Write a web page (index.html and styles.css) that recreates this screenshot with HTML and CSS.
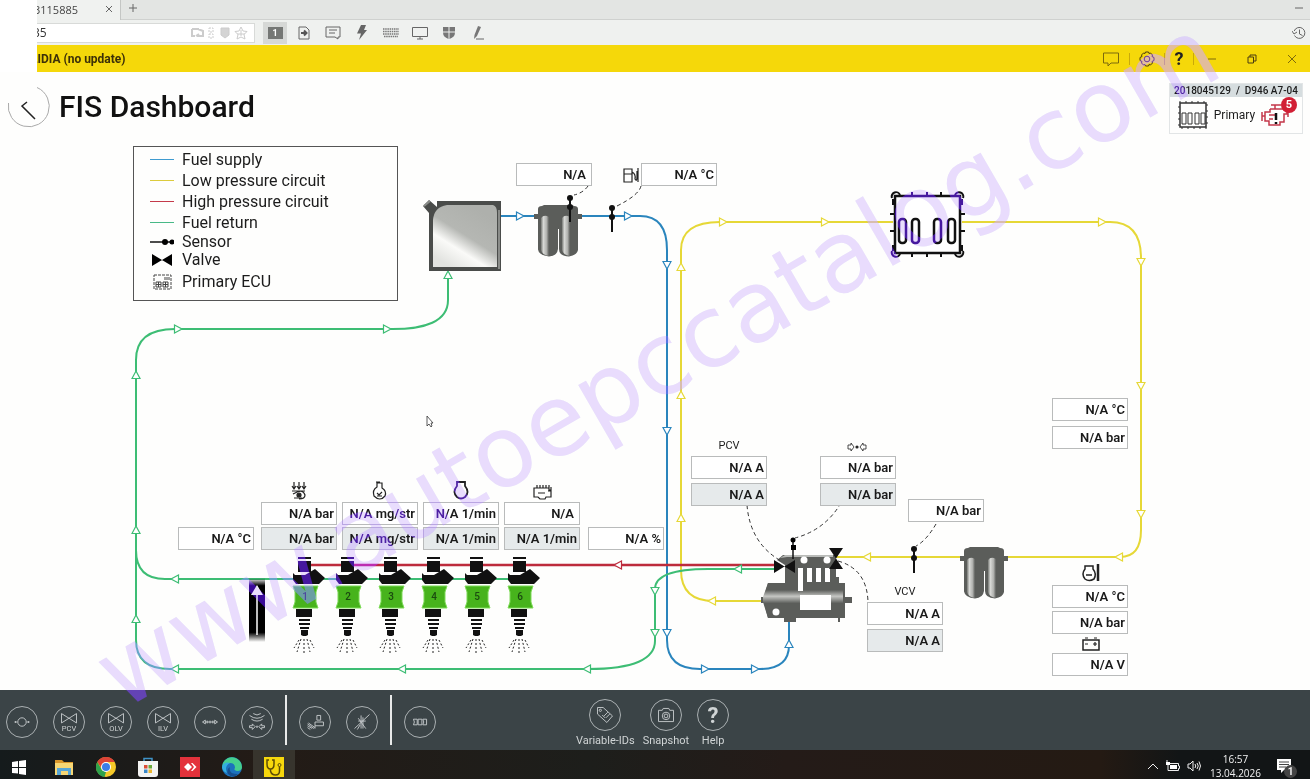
FILE: index.html
```html
<!DOCTYPE html>
<html lang="en">
<head>
<meta charset="utf-8">
<title>FIS Dashboard</title>
<link rel="stylesheet" href="styles.css">
</head>
<body>
<header class="chrome">
  <div class="tabs">
    <div class="tab"><span class="tab-name">3115885</span>
      <button class="plain" aria-label="Close tab"><svg width="8" height="8" viewBox="0 0 8 8"><path class="ln" d="M1 1l6 6M7 1l-6 6"/></svg></button>
    </div>
    <button class="plain new-tab" aria-label="New tab"><svg width="10" height="10" viewBox="0 0 10 10"><path class="ln" d="M5 1v8M1 5h8"/></svg></button>
    <button class="plain win-min" aria-label="Minimise"><svg width="8" height="8" viewBox="0 0 8 8"><path class="ln" d="M0 4h8"/></svg></button>
  </div>
  <div class="tools">
    <div class="address">
      <input class="address-input" type="text" value="35" aria-label="Address">
      <svg width="58" height="16" viewBox="0 0 58 16" class="faint"><path d="M2 4h7M2 4v7h3M6 11l3-2M8 4l5 2v5H7" stroke-width="2"/><path d="M19 3h4v4h-4zM19 9h4v4h-4z" stroke-dasharray="2 1"/><path d="M31 3h8v7l-4 3-4-3z" fill="currentColor"/><path d="M51 2l2 4 4 .5-3 3 1 4.500-4-2-4 2 1-4.500-3-3 4-.5zM47 9h8M51 5v6"/></svg>
    </div>
    <button class="plain tool monitor-no" aria-label="Monitor 1"><span>1</span></button>
    <button class="plain tool" aria-label="Transfer"><svg width="16" height="16" viewBox="0 0 16 16"><path class="ln" d="M3 2h7l3 3v9H3z"/><path class="ln2" d="M5 8h5M8 5.500L10.500 8 8 10.500"/></svg></button>
    <button class="plain tool" aria-label="Chat"><svg width="18" height="16" viewBox="0 0 18 16"><path class="ln" d="M2 2h14v10h-2v2l-3-2H2zM5 5h8M5 8h6"/></svg></button>
    <button class="plain tool" aria-label="Actions"><svg width="16" height="16" viewBox="0 0 16 16"><path fill="#666" d="M7 0h5L10 5h3L5 15 7 8.500H3z"/></svg></button>
    <button class="plain tool" aria-label="Keyboard"><svg width="16" height="16" viewBox="0 0 16 16"><path d="M0 4h16M0 6.500h16M0 9h16M1 11.500h14" stroke="#777" stroke-width="1.500" stroke-dasharray="1.500 .7"/></svg></button>
    <button class="plain tool" aria-label="Display"><svg width="16" height="16" viewBox="0 0 16 16"><path class="ln" d="M.5 2.500h15v9H.5zM5 14h6M8 12v2"/></svg></button>
    <button class="plain tool" aria-label="Permissions"><svg width="14" height="16" viewBox="0 0 14 16"><path fill="#777" d="M1 2h5.500v4.500H1zM7.500 2H13v4.500H7.500zM1 7.500h5.500V14Q1 12 1 7.500zM7.500 7.500H13Q13 12 7.500 14z"/></svg></button>
    <button class="plain tool" aria-label="Whiteboard"><svg width="14" height="16" viewBox="0 0 14 16"><path fill="#777" d="M7 1l3 1-4 9-3 3 .5-4z"/><path class="ln" d="M5 14h8"/></svg></button>
    <button class="plain history" aria-label="History"><svg width="14" height="14" viewBox="0 0 14 14"><path class="ln" d="M2.200 5A5.500 5.500 0 1 1 2.500 9.500M0 5l2 3 3-2M7.500 3.500V8l3 1.500"/></svg></button>
  </div>
  <div class="titlebar">
    <span class="app-name">LIDIA (no update)</span>
    <div class="title-actions">
      <button class="plain" aria-label="Feedback"><svg width="18" height="16" viewBox="0 0 18 16"><path class="br" d="M1.500 2h15v10H9l-3 3v-3H1.500z"/></svg></button>
      <i class="bar"></i>
      <button class="plain" aria-label="Settings"><svg width="16" height="16" viewBox="0 0 16 16"><circle class="dk" cx="8" cy="8" r="2.800"/><path class="dk" d="M6.500 1h3l.5 1.500 1.500-.5 2 2-.5 1.500 2 1v3l-2 1 .5 1.500-2 2-1.500-.5-.5 1.500h-3L6 13.500l-1.500.5-2-2 .5-1.500-2-1v-3l2-1L2.500 4l2-2 1.500.5z"/></svg></button>
      <i class="bar"></i>
      <button class="plain q" aria-label="Help">?</button>
      <i class="bar"></i>
      <button class="plain w1" aria-label="Minimise window"><svg width="10" height="10" viewBox="0 0 10 10"><path class="br" d="M1 5h8"/></svg></button>
      <button class="plain w2" aria-label="Restore window"><svg width="10" height="10" viewBox="0 0 10 10"><path class="dk" d="M1 3h5.500v6H1zM3 3V1h6v6H6.500"/></svg></button>
      <button class="plain w3" aria-label="Close window"><svg width="10" height="10" viewBox="0 0 10 10"><path class="br" d="M1 1l8 8M9 1l-8 8"/></svg></button>
    </div>
  </div>
</header>

<main>
  <div class="heading">
    <button class="plain back" aria-label="Back"><svg width="44" height="44" viewBox="0 0 44 44"><path d="M30 2.500A20.500 20.500 0 1 1 1.500 18" fill="none" stroke="#aaa"/><path d="M20 17l-5 4 13 13" fill="none" stroke="#222" stroke-width="1.500"/></svg></button>
    <h1>FIS Dashboard</h1>
    <section class="machine">
      <div class="machine-id">2018045129 &nbsp;/ &nbsp;D946 A7-04</div>
      <div class="machine-body">
        <svg width="30" height="28" viewBox="0 0 30 28" fill="none" stroke="#333"><path d="M2 2h26v24H2z" stroke-width="1.500"/><path d="M1 1h28v26H1z" stroke-dasharray="2 4"/><path d="M4 12h4v11H4zM10 12h4v11h-4zM17 12h4v11h-4zM23 12h4v11h-4z"/></svg>
        <span>Primary</span>
        <div class="alert"><svg width="30" height="28" viewBox="0 0 30 28"><path d="M9 8h17M9 8v3H4v9h4v4h11v-3h4v-8h3V8M14 8V4M10 4h10M1 11v9M1 15h3M8 14h6M8 18h4M27 11v5" fill="none" stroke="#c4374a" stroke-width="1.500"/><path d="M15 12v7M15 21v2" stroke="#111" stroke-width="2.500"/></svg><b>5</b></div>
      </div>
    </section>
  </div>

  <div class="canvas">
    <svg class="drawing" width="1310" height="556" viewBox="0 134 1310 556">
      <defs>
        <path id="arw" d="M-3.500-4L4 0l-7.500 4z"/>
        <linearGradient id="cyl"><stop offset="0" stop-color="#777975"/><stop offset=".3" stop-color="#d8d9d6"/><stop offset=".7" stop-color="#b0b1ae"/><stop offset="1" stop-color="#5b5d5a"/></linearGradient>
        <linearGradient id="steel" x1=".2" y1=".95" x2=".75" y2=".1"><stop offset="0" stop-color="#e2e3e0"/><stop offset=".3" stop-color="#fafaf8"/><stop offset=".55" stop-color="#b5b7b3"/><stop offset="1" stop-color="#aeb0ac"/></linearGradient>
        <linearGradient id="drum" x2="0" y2="1"><stop offset="0" stop-color="#5b5d5a"/><stop offset=".2" stop-color="#5b5d5a"/><stop offset=".38" stop-color="#c5c6c3"/><stop offset=".58" stop-color="#5b5d5a"/></linearGradient>
        <linearGradient id="fade" x2="0" y2="1"><stop offset="0" stop-opacity="0"/><stop offset=".12"/><stop offset=".85"/><stop offset="1" stop-opacity="0"/></linearGradient>
        <g id="filter">
          <path fill="#5b5d5a" d="M-24 9h4V4q0-3 4-3l2-1h28l2 1q4 0 4 3v5h4v5h-4v31q-1 5-9 6.500Q1 51 1 44V24h-1v20q-1 7-9 7.500-10-1-11-7V14h-4z"/>
          <path fill="url(#cyl)" d="M-17 13q3-4 8-1v39q-7-1-8-6z"/><path fill="url(#cyl)" d="M4 13q3-4 8-1v39q-7-1-8-6z"/>
        </g>
        <g id="sensor"><path d="M0 0v24" stroke="#111" stroke-width="2"/><circle r="3"/><circle cy="9" r="3"/></g>
        <g id="injector">
          <path d="M-7 558h13" stroke="#111" stroke-width="2"/><path d="M-7 561H6v11H-7z"/>
          <path d="M-12 573l2 2h10l10-6 10 9-6 6H-9l-3-4z"/>
          <path fill="#47b31c" stroke="#7edb58" d="M-12 586h25l-2 6v10l2 6h-25l2-6v-10z"/>
          <path d="M-9 609H7v8H-9z"/><path d="M-6 620H5M-6 624H5M-5 628H4" stroke="#111" stroke-width="2"/><path d="M-4 630h7v5l-2 1h-3l-2-1z"/>
          <path d="M-4 639l-4 13M-1 639v16M2 639l3 13M-6 640l-5 8M5 640l4 8" fill="none" stroke="#222" stroke-dasharray="2 2"/>
        </g>
      </defs>

      <g fill="none" stroke-width="2">
        <g stroke="#2a85bd"><path d="M501 216h139Q667 216 667 250V640Q667 669 700 669H760Q789 669 789 645V621"/></g>
        <g stroke="#e6d837"><path d="M764 601h-50Q681 601 681 570V250Q681 222 720 222H893M962 222h148Q1141 222 1141 258V530Q1141 557 1120 557H836"/></g>
        <path stroke="#3dbd74" d="M778 569h-70Q655 569 655 589V640Q656 669 588 669H170Q136 669 136 640V360Q136 329 175 329H385Q448 331 448 300V275M520 579H165Q136 579 136 550"/>
        <path stroke="#bd2b3c" stroke-width="2.500" d="M305 565H780"/>
      </g>
      <g fill="#fff" stroke-width="1.200">
        <g stroke="#2a85bd"><use href="#arw" x="520" y="216"/><use href="#arw" x="628" y="216"/><use href="#arw" transform="translate(667 265)rotate(90)"/><use href="#arw" transform="translate(667 431)rotate(90)"/><use href="#arw" transform="translate(667 633)rotate(90)"/><use href="#arw" x="705" y="669"/><use href="#arw" x="755" y="669"/><use href="#arw" transform="translate(789 644)rotate(-90)"/></g>
        <g stroke="#e6d837"><use href="#arw" transform="translate(681 267)rotate(-90)"/><use href="#arw" transform="translate(681 395)rotate(-90)"/><use href="#arw" transform="translate(681 518)rotate(-90)"/><use href="#arw" transform="translate(712 601)rotate(180)"/><use href="#arw" x="723" y="222"/><use href="#arw" x="825" y="222"/><use href="#arw" x="1102" y="222"/><use href="#arw" transform="translate(1141 262)rotate(90)"/><use href="#arw" transform="translate(1141 386)rotate(90)"/><use href="#arw" transform="translate(1141 514)rotate(90)"/><use href="#arw" transform="translate(1119 557)rotate(180)"/><use href="#arw" transform="translate(867 557)rotate(180)"/></g>
        <g stroke="#bd2b3c"><use href="#arw" transform="translate(618 565)rotate(180)"/></g>
        <g stroke="#3dbd74"><use href="#arw" transform="translate(738 569)rotate(180)"/><use href="#arw" transform="translate(655 591)rotate(90)"/><use href="#arw" transform="translate(655 633)rotate(90)"/><use href="#arw" transform="translate(587 669)rotate(180)"/><use href="#arw" transform="translate(402 669)rotate(180)"/><use href="#arw" transform="translate(175 669)rotate(180)"/><use href="#arw" transform="translate(136 619)rotate(-90)"/><use href="#arw" transform="translate(136 530)rotate(-90)"/><use href="#arw" transform="translate(136 375)rotate(-90)"/><use href="#arw" x="178" y="329"/><use href="#arw" x="387" y="329"/><use href="#arw" transform="translate(448 275)rotate(-90)"/><use href="#arw" transform="translate(175 579)rotate(180)"/></g>
      </g>

      <!-- tank -->
      <path fill="#4a4c4a" d="M423 206l6-6 8 7v-6h64v70h-72v-58z"/>
      <path fill="url(#steel)" d="M447 205h46q4 1 4 8v54h-64v-47q1-13 14-15z"/>
      <path stroke="#8a8c89" stroke-width="2" d="M499 210v59M424 206l6-5"/>

      <use href="#filter" x="558" y="205"/>
      <use href="#filter" x="984" y="547"/>
      <g fill="#111">
        <use href="#sensor" x="570" y="198"/><use href="#sensor" x="612" y="208"/><use href="#sensor" x="914" y="549"/>
      </g>

      <!-- engine control unit -->
      <g fill="none" stroke="#111">
        <path fill="#fff" stroke-width="2.500" d="M895 196h65v57h-65z"/>
        <path stroke-width="2" d="M892 198a4 4 0 0 1 8-3M955 195a4 4 0 0 1 8 3M892 251a4 4 0 0 0 8 3M955 254a4 4 0 0 0 8-3M912 196v-4M927 196v-4M941 196v-4M912 253v4M927 253v4M941 253v4M895 214h-5M895 231h-5M960 214h5M960 231h5M893 199v6M962 199v6M893 245v6M962 245v6"/>
        <g stroke-width="2.500"><rect x="899" y="219" width="7" height="24" rx="3"/><rect x="912" y="219" width="7" height="24" rx="3"/><rect x="934" y="219" width="7" height="24" rx="3"/><rect x="948" y="219" width="7" height="24" rx="3"/></g>
      </g>

      <!-- pump -->
      <path fill="#5b5d5a" d="M777 560l6-5h53v22h3v6h6v14h7v6h-7v15h-5v4h-2v-4h-42v4h-12v-4h-16l-4-15h-3v-6h3l4-14h17v-18z"/>
      <path fill="url(#drum)" d="M768 583h75v35h-75l-5-16v-5z"/>
      <path fill="#b9bbb8" d="M780 558l5-3h48v2h-46z"/>
      <g fill="#fff"><circle cx="804" cy="560" r="3.500"/><circle cx="827" cy="560" r="3.500"/><circle cx="776" cy="612" r="3.500"/><path d="M798 568h5v23h-5zM807 568h5v14h-5zM816 568h5v14h-5zM825 568h5v14h-5zM800 595h31v15h-31z"/></g>
      <path d="M774 560l21 13v-13l-21 13zM829 548h14l-14 21h14z" fill="#111"/>
      <path d="M793 540v19" stroke="#111" stroke-width="1.500"/><circle cx="793" cy="540" r="2.500"/><path d="M791 545h5v5h-5z"/>

      <!-- leader lines -->
      <g fill="none" stroke="#333" stroke-dasharray="4 3">
        <path d="M588 186q-5 7-14 9M641 186q-2 9-24 20M747 505q3 38 34 56M841 503q-16 27-46 35M936 524q-10 17-20 22M838 561q29 8 30 41"/>
      </g>

      <!-- preheater column -->
      <path fill="url(#fade)" d="M249 578h16v64h-16z"/><path d="M257 635v-40" stroke="#fff" stroke-width="1.500"/><path fill="#fff" d="M251 595l6-10 6 10z"/>

      <g fill="#111"><use href="#injector" x="305"/><use href="#injector" x="348"/><use href="#injector" x="391"/><use href="#injector" x="434"/><use href="#injector" x="477"/><use href="#injector" x="520"/></g>
      <g class="inj-no"><text x="305" y="600">1</text><text x="348" y="600">2</text><text x="391" y="600">3</text><text x="434" y="600">4</text><text x="477" y="600">5</text><text x="520" y="600">6</text></g>

      <!-- measurement symbols -->
      <g fill="none" stroke="#222" stroke-width="1.200">
        <path d="M624 169h8v13h-8zM624 174h8M632 172q4 2 3 7 2 3 2-2v-6M638 168v14"/>
        <path d="M294 482v6M299 482v6M304 482v6M292 486l2 3 2-3M297 486l2 3 2-3M302 486l2 3 2-3M292 491h13M293 494q10-6 12 1 0 4-6 4M294 498h8"/><circle cx="299" cy="495" r="2" fill="#222"/>
        <path d="M377 487v-4h5v5q5 3 3 8-5 6-11 0-2-6 3-9zM376 482h4M377 493l2 2 3-3M377 496h5"/>
        <path stroke-width="1.800" d="M457 486q-5 6 0 11 4 3 8 0 5-5 0-11v-4h-8z"/>
        <path d="M536 488h13v2h2v7h-5l-1 2h-5l-2-2h-4v-9zM537 485v3M540 485v3M543 485v3M546 485v3M549 485v3M551 487v8M538 493h7M551 491h-3"/>
        <path d="M848 445h3v-2l3 4-3 4v-2h-3zM866 445h-3v-2l-3 4 3 4v-2h3z" stroke-width=".8"/><circle cx="857" cy="447" r="1" fill="#222"/>
        <path stroke-width="1.500" d="M1085 569q-4 5 0 10 4 3 9 0 3-5-1-10v-3h-8zM1086 575h6"/><path stroke-width="2.500" d="M1098 564v17"/>
        <path stroke-width="1.500" d="M1083 640h16v10h-16z"/><path d="M1085 638h3M1094 638h3M1085 644h3M1093 644h4M1095 642v4"/>
      </g>
      <path d="M427 416v10l2-2 2 3 1-1-1-3h2z" fill="#fff" stroke="#333" stroke-width=".8"/>
    </svg>

    <ul class="legend">
      <li><i class="key supply"></i>Fuel supply</li>
      <li><i class="key low"></i>Low pressure circuit</li>
      <li><i class="key high"></i>High pressure circuit</li>
      <li><i class="key return"></i>Fuel return</li>
      <li class="tight"><svg width="24" height="10" viewBox="0 0 24 10"><path d="M0 5h20" stroke="#111" stroke-width="1.500"/><circle cx="15" cy="5" r="3"/><circle cx="22" cy="5" r="2.500"/></svg>Sensor</li>
      <li class="tight"><svg width="24" height="14" viewBox="0 0 24 14"><path d="M2 1l20 12V1L2 13z"/></svg>Valve</li>
      <li><svg width="24" height="18" viewBox="0 0 24 18" fill="none" stroke="#444"><path d="M4 2h17v14H4z" stroke-dasharray="3 1"/><path d="M6 9h5v5H6zM8.500 9v5M6 11.500h5M13 9h5v5h-5zM15.500 9v5M13 11.500h5M15 4v3M17 4v3M19 4v3"/></svg>Primary ECU</li>
    </ul>

    <div class="node n-filter"><output class="val pad">N/A</output></div>
    <div class="node n-fuel"><output class="val">N/A °C</output></div>
    <div class="node n-rail">
      <output class="val first">N/A °C</output>
      <div class="pair"><output class="val">N/A bar</output><output class="val set">N/A bar</output></div>
      <div class="pair"><output class="val">N/A mg/str</output><output class="val set">N/A mg/str</output></div>
      <div class="pair"><output class="val">N/A 1/min</output><output class="val set">N/A 1/min</output></div>
      <div class="pair"><output class="val pad">N/A</output><output class="val set">N/A 1/min</output></div>
      <output class="val last">N/A %</output>
    </div>
    <div class="node n-pcv"><span class="cap">PCV</span><output class="val">N/A A</output><output class="val set">N/A A</output></div>
    <div class="node n-press"><output class="val">N/A bar</output><output class="val set">N/A bar</output></div>
    <div class="node n-low"><output class="val">N/A bar</output></div>
    <div class="node n-vcv"><span class="cap">VCV</span><output class="val">N/A A</output><output class="val set">N/A A</output></div>
    <div class="node n-air"><output class="val">N/A °C</output><output class="val">N/A bar</output></div>
    <div class="node n-oil"><output class="val">N/A °C</output><output class="val">N/A bar</output></div>
    <div class="node n-bat"><output class="val">N/A V</output></div>
  </div>
</main>

<nav class="actions">
  <div class="group">
    <button class="round" aria-label="Components"><svg viewBox="0 0 32 32"><circle cx="16" cy="16" r="4.500"/><path d="M8 16h3M21 16h3M9 15v2M23 15v2"/></svg></button>
    <button class="round" aria-label="PCV"><svg viewBox="0 0 32 32"><path d="M8 7l16 10V7L8 17z"/><text x="16" y="26">PCV</text></svg></button>
    <button class="round" aria-label="OLV"><svg viewBox="0 0 32 32"><path d="M8 7l16 10V7L8 17z"/><text x="16" y="26">OLV</text></svg></button>
    <button class="round" aria-label="ILV"><svg viewBox="0 0 32 32"><path d="M8 7l16 10V7L8 17z"/><text x="16" y="26">ILV</text></svg></button>
    <button class="round" aria-label="Range"><svg viewBox="0 0 32 32"><path d="M8 16l3-2v4zM24 16l-3-2v4zM11 16h10M13 14.500v3M16 14.500v3M19 14.500v3"/></svg></button>
    <button class="round" aria-label="Pressure test"><svg viewBox="0 0 32 32"><path d="M8 9q8 6 16 0M10 13q6 4 12 0M12 7q4 3 8 0M8 20h3v-2l3 3-3 3v-2H8zM24 20h-3v-2l-3 3 3 3v-2h3z"/><circle cx="16" cy="21" r=".8"/></svg></button>
    <i class="rule"></i>
    <button class="round" aria-label="Operator"><svg viewBox="0 0 32 32"><path d="M18 9h4v5h-4zM16 20v-4h9v4zM8 18l7 5M8 20l5 3M8 22l3 2M9 17l7 5M16 20v3"/></svg></button>
    <button class="round" aria-label="Cut out"><svg viewBox="0 0 32 32"><path d="M24 8L8 23M15 9v14M12 12l8 11M12 15h8M14 19l-3 5M17 11v12"/></svg></button>
    <i class="rule"></i>
    <button class="round" aria-label="Cylinders"><svg viewBox="0 0 32 32"><path d="M9 13h4v6H9l1-3zM14 13h4v6h-4zM19 13h4v6h-4l1-3z"/></svg></button>
  </div>
  <div class="group labelled">
    <button class="item"><span class="round"><svg viewBox="0 0 32 32"><path d="M8 8h6l10 9-6 7-10-9zM15 17l4-4M17 19l4-4M13 16l3 3"/><circle cx="11" cy="11" r="1.200"/></svg></span>Variable-IDs</button>
    <button class="item"><span class="round"><svg viewBox="0 0 32 32"><path d="M8 11h4l1-2h6l1 2h4v12H8z"/><circle cx="16" cy="17" r="4"/><circle cx="16" cy="17" r="2"/></svg></span>Snapshot</button>
    <button class="item"><span class="round mark">?</span>Help</button>
  </div>
</nav>

<footer class="taskbar">
  <div class="apps">
    <button class="app start" aria-label="Start"><svg width="20" height="20" viewBox="0 0 20 20"><path fill="#fff" d="M3 5l6-1v6H3zM10 4l7-1v7h-7zM3 11h6v5.500L3 16zM10 11h7v7l-7-1z"/></svg></button>
    <button class="app" aria-label="Explorer"><svg width="20" height="20" viewBox="0 0 20 20"><path fill="#d9972b" d="M1 3h7l2 2h9v4H1z"/><path fill="#f7d774" d="M1 6h18v12H1z"/><path fill="#58a6d6" d="M3 11h14v7h-3v-4H7v4H3z"/></svg></button>
    <button class="app" aria-label="Chrome"><svg width="20" height="20" viewBox="0 0 20 20"><circle cx="10" cy="10" r="10" fill="#f6c928"/><path fill="#dc4437" d="M1.300 5A10 10 0 0 1 18.700 5H10L6 12z"/><path fill="#2fa24c" d="M1.300 5L6 13l4 2-1.500 5A10 10 0 0 1 1.300 5z"/><circle cx="10" cy="10" r="5" fill="#fff"/><circle cx="10" cy="10" r="4" fill="#3b7de9"/></svg></button>
    <button class="app" aria-label="Store"><svg width="20" height="20" viewBox="0 0 20 20"><path fill="none" stroke="#3f93c8" stroke-width="1.500" d="M6 5V1.500h8V5"/><path fill="#f4f4f2" d="M0 4h20v13q0 3-3 3H3q-3 0-3-3z"/><path fill="#dc4d35" d="M6 8h3.500v3.500H6z"/><path fill="#69a83a" d="M10.500 8H14v3.500h-3.500z"/><path fill="#3a88c9" d="M6 12.500h3.500V16H6z"/><path fill="#edb62d" d="M10.500 12.500H14V16h-3.500z"/></svg></button>
    <button class="app" aria-label="AnyDesk"><svg width="20" height="20" viewBox="0 0 20 20"><path fill="#e3323b" d="M0 0h20v20H0z"/><path fill="#fff" d="M8 6l4 4-4 4-4-4zM11 6h1.500l4 4-4 4H11l3-4z"/></svg></button>
    <button class="app" aria-label="Edge"><svg width="20" height="20" viewBox="0 0 20 20"><circle cx="10" cy="10" r="10" fill="#1c72bd"/><path fill="#45cf8e" d="M1 6A10 10 0 0 1 20 10q0 4-5 4-4-1-2-3 0-5-5-5Q3 6 0 10z"/><path fill="#33aee0" d="M0 10Q2 4 8 6q-6 3-3 10Q0 14 0 10z"/><path fill="#164f8f" d="M8 10q-2 7 8 7-5 5-10 0-2-5 2-7z"/></svg></button>
    <button class="app active" aria-label="Diagnostics"><svg width="20" height="20" viewBox="0 0 20 20"><path fill="#f7d70c" d="M0 0h20v20H0z"/><path fill="none" stroke="#5d4c05" stroke-width="1.500" d="M5 3H3v4q0 5 3.500 5T10 7V3H8M6.500 12v2q1 4 5 4t4-4V9.500"/><circle cx="15.500" cy="8" r="1.500" fill="none" stroke="#5d4c05"/></svg></button>
  </div>
  <div class="tray">
    <svg width="12" height="8" viewBox="0 0 12 8"><path class="wt" d="M1 7l5-5 5 5"/></svg>
    <svg width="14" height="12" viewBox="0 0 14 12"><path fill="#fff" d="M4 5h7v4H4zM0 2h4v3H0z"/><path class="wt" d="M2 5v5.500h10.500v-2h1V6h-1V3.500H4M1 0v2"/></svg>
    <svg width="14" height="12" viewBox="0 0 14 12"><path class="wt" d="M1 4h2l3-3v10L3 8H1zM8 4q1.500 2 0 4M10 3q2.500 3 0 6M12 1.500q3 4.500 0 9"/></svg>
    <div class="clock"><span>16:57</span><span>13.04.2026</span></div>
    <div class="notes"><svg width="16" height="16" viewBox="0 0 16 16"><path fill="#fff" d="M1 1h14v11H8l-3 3v-3H1z"/><path stroke="#444" d="M3 4h10M3 6.500h10M3 9h7"/></svg><b>1</b></div>
  </div>
</footer>

<svg class="watermark tint"><text id="mark" x="0" y="0" transform="translate(122 711)rotate(-30)">www.autoepccatalog.com</text></svg>
<svg class="watermark glow" aria-hidden="true"><use href="#mark"/></svg>
</body>
</html>
```
FILE: styles.css
```css
* { box-sizing: border-box; }
html { background: #fff; }
body {
  margin: 0;
  min-height: 100vh;
  display: flex;
  flex-direction: column;
  position: relative;
  background: #fefefd;
  color: #1c1c1c;
  font-family: Roboto, "Liberation Sans", sans-serif;
}
svg { display: block; flex: none; }
.plain, .item, .app, button.round {
  border: 0;
  padding: 0;
  background: none;
  color: inherit;
  font: inherit;
  display: flex;
  align-items: center;
  justify-content: center;
}
.ln { fill: none; stroke: #666; }
.ln2 { fill: none; stroke: #555; stroke-width: 2; }
.br { fill: none; stroke: #7d6a0c; }
.dk { fill: none; stroke: #4a3c10; }
.wt { fill: none; stroke: #eee; }

/* window chrome; a blank strip lies over its left end */
.chrome { position: relative; }
.chrome::after {
  content: "";
  position: absolute;
  left: 0;
  top: 0;
  bottom: 0;
  width: 37px;
  background: #fff;
}
.tabs { display: flex; height: 20px; background: #e3e5e3; border-bottom: 1px solid #cfd1cf; }
.tab {
  width: 121px;
  height: 20px;
  display: flex;
  align-items: center;
  justify-content: space-between;
  padding: 0 7px 0 34px;
  background: #f0f2f0;
  border-right: 1px solid #c4c6c4;
}
.tab-name { font: 11px/16px "Open Sans", sans-serif; color: #444; }
.tab button { margin-bottom: 2px; }
.new-tab { width: 24px; height: 16px; }
.win-min { margin-left: auto; width: 22px; height: 16px; }
.tools { display: flex; align-items: center; height: 25px; background: #eff1ef; }
.address {
  width: 255px;
  height: 20px;
  display: flex;
  align-items: center;
  background: #fff;
  border: 1px solid #d8dad8;
  border-left: 0;
}
.address-input {
  flex: 1;
  min-width: 0;
  padding: 0 0 0 33px;
  border: 0;
  background: none;
  font: 12px/18px "Open Sans", sans-serif;
  color: #333;
}
.faint { margin-right: 6px; fill: none; stroke: #ccc; color: #d4d4d4; }
.tool { width: 24px; height: 22px; margin-right: 5px; }
.monitor-no { margin-left: 8px; background: #d6d8d6; }
.monitor-no span { width: 15px; background: #757775; color: #fff; font: bold 9px/12px Roboto, sans-serif; }
.history { margin-left: auto; width: 22px; }
.titlebar {
  display: flex;
  align-items: center;
  justify-content: space-between;
  height: 27px;
  padding-left: 31px;
  background: #f5d80a;
}
.app-name { font: bold 12px/26px Roboto, sans-serif; color: #3c3008; }
.title-actions { display: flex; align-items: center; gap: 9px; padding-right: 13px; }
.bar { width: 1px; height: 12px; background: #c9a90a; }
.q { width: 10px; font: bold 18px/24px Roboto, sans-serif; color: #222; }
.w1 { margin-left: 4px; }
.w2 { margin: 0 21px; }

/* page heading */
main { flex: 1; }
.heading { display: flex; align-items: center; height: 62px; padding: 0 7px; }
.back { width: 44px; margin-top: 8px; }
h1 { margin: 8px 0 0 8px; font: 500 30px/40px Roboto, sans-serif; color: #111; }
.machine { align-self: flex-end; margin-left: auto; width: 134px; border: 1px solid #e2e5e6; }
.machine-id { background: #d6dddf; font-size: 10px; font-weight: 500; line-height: 13px; text-align: center; white-space: nowrap; }
.machine-body { display: flex; align-items: center; justify-content: space-between; height: 36px; padding: 0 11px 0 8px; font-size: 12px; }
.alert { position: relative; }
.alert b {
  position: absolute;
  top: -4px;
  right: -6px;
  width: 16px;
  border-radius: 8px;
  background: #d21f35;
  color: #fff;
  font-size: 11px;
  line-height: 16px;
  text-align: center;
}

/* diagram */
.canvas { position: relative; min-height: 556px; }
.drawing { position: absolute; top: 0; left: 0; }
.inj-no { font: 500 10px Roboto, sans-serif; fill: #1b4a10; text-anchor: middle; }
.legend {
  position: absolute;
  left: 133px;
  top: 12px;
  width: 265px;
  margin: 0;
  padding: 2px 16px 5px;
  border: 1px solid #555;
  list-style: none;
  font-size: 16px;
  line-height: 18px;
}
.legend li { display: flex; align-items: center; gap: 8px; height: 21px; }
.legend .tight { height: 18px; }
.legend li:last-child { height: 26px; }
.key { width: 24px; height: 1px; }
.supply { background: #3f9bd0; }
.low { background: #dccb3d; }
.high { background: #c43a4a; }
.return { background: #48b987; }

.node { position: absolute; display: flex; flex-direction: column; width: 76px; gap: 4px; }
.val {
  display: block;
  width: 76px;
  height: 23px;
  padding: 0 2px;
  border: 1px solid #b9bbbb;
  background: #fff;
  color: #1a1a1a;
  font-size: 13px;
  font-weight: 600;
  line-height: 21px;
  text-align: right;
  white-space: nowrap;
}
.val.pad { padding-right: 5px; }
.val.set { background: #e6eaeb; }
.cap { font-size: 11px; line-height: 12px; text-align: center; }
.n-filter { left: 516px; top: 29px; }
.n-fuel { left: 641px; top: 29px; }
.n-rail { left: 178px; top: 368px; width: auto; flex-direction: row; align-items: flex-end; gap: 5px; }
.first { margin-right: 2px; }
.last { margin-left: 3px; }
.pair { display: flex; flex-direction: column; gap: 2px; }
.n-pcv { left: 691px; top: 306px; }
.n-press { left: 820px; top: 322px; }
.n-low { left: 908px; top: 365px; }
.n-vcv { left: 867px; top: 452px; }
.n-air { left: 1052px; top: 264px; gap: 5px; }
.n-oil { left: 1052px; top: 451px; gap: 3px; }
.n-bat { left: 1052px; top: 519px; }

/* action bar */
.actions {
  display: grid;
  grid-template-columns: 1fr auto 1fr;
  height: 60px;
  background: #3b4447;
  color: #d0d4d5;
}
.group { display: flex; align-items: center; gap: 15px; padding: 4px 0 0 6px; min-width: 0; }
.round {
  flex: none;
  width: 32px;
  height: 32px;
}
button.round, span.round { border: 1px solid #aab0b2; border-radius: 50%; display: flex; align-items: center; justify-content: center; }
.round svg { width: 30px; height: 30px; fill: none; stroke: #c3c8ca; }
.round text { font: 8px Roboto, sans-serif; fill: #d0d4d5; stroke: none; text-anchor: middle; }
.rule { flex: none; width: 2px; height: 50px; margin: -4px -3px 0; background: #e8eaea; }
.labelled { align-items: flex-start; gap: 8px; padding: 9px 5px 0 0; }
.item { flex-direction: column; gap: 3px; font-size: 11px; line-height: 13px; }
.mark { font-size: 22px; font-weight: bold; }

/* taskbar */
.taskbar {
  display: flex;
  justify-content: space-between;
  height: 29px;
  background: linear-gradient(90deg, #151b1c, #231b16 20%, #1d1e1b 45%, #241b18 60%, #241a13 84%, #121516 90%);
  color: #f0f0f0;
}
.apps, .tray { display: flex; align-items: center; }
.app { width: 42px; height: 29px; padding-top: 5px; }
.start { width: 43px; padding-right: 5px; }
.active { background: #37342d; }
.tray { gap: 7px; padding: 2px 18px 0 0; }
.clock { display: flex; flex-direction: column; text-align: center; font: 10px/14px "Open Sans", sans-serif; margin-left: 2px; }
.notes { position: relative; margin-left: 8px; }
.notes b {
  position: absolute;
  left: 8px;
  top: 7px;
  width: 13px;
  border-radius: 7px;
  background: #444;
  font-size: 10px;
  line-height: 13px;
  text-align: center;
}

/* watermark */
.watermark {
  position: absolute;
  top: 0;
  left: 0;
  width: 100%;
  height: 100%;
  pointer-events: none;
  fill: currentColor;
  font: 99px "DejaVu Sans", sans-serif;
}
.tint { color: #e3dcfb; mix-blend-mode: multiply; }
.glow { color: #3a0a98; mix-blend-mode: screen; }
```
